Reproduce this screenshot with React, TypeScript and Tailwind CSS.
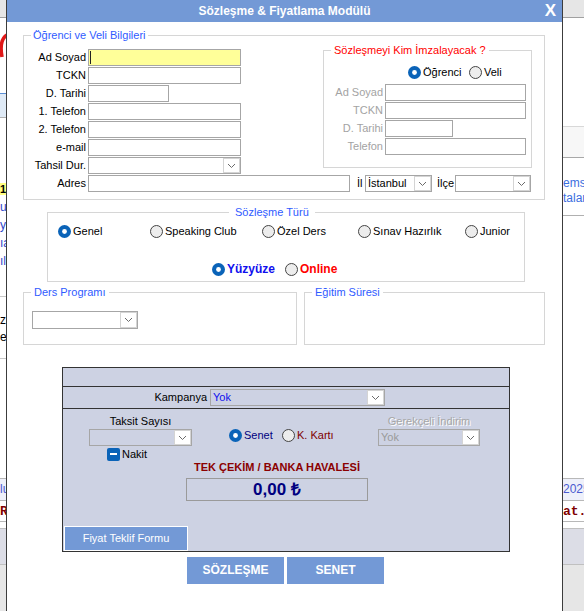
import React from "react";

function Chevron() {
  return (
    <svg width="9" height="6" viewBox="0 0 9 6">
      <path d="M1 1l3.5 3.5L8 1" fill="none" stroke="#6b6b6b" strokeWidth="1" />
    </svg>
  );
}

function Radio({ on = false }: { on?: boolean }) {
  return on ? (
    <svg width="13" height="13" viewBox="0 0 13 13" className="shrink-0">
      <circle cx="6.5" cy="6.5" r="6.5" fill="#0a63b8" />
      <circle cx="6.5" cy="6.5" r="2.4" fill="#fff" />
    </svg>
  ) : (
    <svg width="13" height="13" viewBox="0 0 13 13" className="shrink-0">
      <circle cx="6.5" cy="6.5" r="6" fill="#ededed" stroke="#444" strokeWidth="1" />
    </svg>
  );
}

function Input({ w, yellow = false }: { w: string; yellow?: boolean }) {
  return (
    <div className={`relative h-[17px] border border-[#a6a6a6] ${yellow ? "bg-[#ffff99]" : "bg-white"} ${w}`}>
      {yellow && <div className="ml-[1px] mt-[1px] h-[13px] w-[1px] bg-[#222]" />}
    </div>
  );
}

function Select({
  w,
  text = "",
  tone = "text-black",
  bg = "bg-white",
  h = "h-[17px]",
}: {
  w: string;
  text?: string;
  tone?: string;
  bg?: string;
  h?: string;
}) {
  return (
    <div className={`flex items-stretch border border-[#a6a6a6] ${h} ${bg} ${w}`}>
      <div className={`flex flex-1 items-center pl-[2px] ${tone}`}>{text}</div>
      <div className="flex w-[17px] items-center justify-center border border-[#d4d4d4] bg-white">
        <Chevron />
      </div>
    </div>
  );
}

function Row({ label, children, gray = false }: { label: string; children: React.ReactNode; gray?: boolean }) {
  return (
    <div className="flex h-[17px] items-center">
      <span className={`text-right ${gray ? "w-[59px] text-[#a3a3a3]" : "w-[62px]"}`}>{label}</span>
      <div className="ml-[2px]">{children}</div>
    </div>
  );
}

function Opt({ on = false, label, w = "" }: { on?: boolean; label: string; w?: string }) {
  return (
    <div className={`flex items-center gap-[2px] ${w}`}>
      <Radio on={on} />
      <span>{label}</span>
    </div>
  );
}

function Strip({ side }: { side: "left" | "right" }) {
  const left = side === "left";
  return (
    <div className={`flex flex-col overflow-hidden ${left ? "w-[6px]" : "w-[21px]"}`}>
      <div className="h-[18px] shrink-0 border-b border-[#a0a0a0] bg-[#e6e6e6]" />
      {left ? (
        <>
          <div className="h-[15px] shrink-0" />
          <svg width="6" height="26" viewBox="0 0 6 26" className="shrink-0">
            <path d="M7 2C2 5 0 13 2 24" fill="none" stroke="#e01818" strokeWidth="3.5" />
          </svg>
          <div className="h-[34px] shrink-0" />
          <div className="h-[25px] shrink-0 border-y border-t-[#5b8fd6] border-b-[#b0b0b0] bg-[#dfeaf6]" />
          <div className="h-[65px] shrink-0" />
          <div className="h-[12px] shrink-0 bg-[#ffff80] text-[11px] font-bold leading-[12px]">1.</div>
          <div className="h-[3px] shrink-0" />
          {["unvan", "yetki", "ıa", "ılgi"].map((t) => (
            <div key={t} className="flex h-[18px] shrink-0 items-center whitespace-nowrap text-[12px] text-[#3048c8]">
              {t}
            </div>
          ))}
          <div className="h-[27px] shrink-0 border-b border-[#c8c8c8]" />
          <div className="h-[15px] shrink-0" />
          <div className="flex h-[17px] shrink-0 items-center whitespace-nowrap text-[12px]">za</div>
          <div className="flex h-[17px] shrink-0 items-center whitespace-nowrap text-[12px]">et</div>
          <div className="h-[13px] shrink-0 border-b border-[#c8c8c8]" />
          <div className="h-[119px] shrink-0" />
        </>
      ) : (
        <>
          <div className="h-[108px] shrink-0" />
          <div className="h-[32px] shrink-0 border-y border-t-[#d8d8d8] border-b-[#a8a8a8] bg-[#f7f7f7]" />
          <div className="h-[18px] shrink-0" />
          <div className="flex h-[15px] shrink-0 items-center whitespace-nowrap text-[12px] text-[#3b6ee0]">emsil</div>
          <div className="flex h-[15px] shrink-0 items-center whitespace-nowrap text-[12px] text-[#3b6ee0]">talar</div>
          <div className="h-[10px] shrink-0 border-b border-[#b0b0b0]" />
          <div className="h-[262px] shrink-0" />
        </>
      )}
      <div className="flex h-[22px] shrink-0 items-center whitespace-nowrap border-t border-[#b8b8b8] bg-[#eef0fa] text-[12px] text-[#4a5ad0]">
        {left ? "lu" : "2025"}
      </div>
      <div className="flex h-[22px] shrink-0 items-center whitespace-nowrap border-y border-[#b8b8b8] font-['Liberation_Mono',monospace] text-[13px] font-bold text-[#800000]">
        {left ? "R" : "at."}
      </div>
      <div className="h-[6px] shrink-0" />
      <div className="h-[37px] shrink-0 border-y border-[#c0c0c0] bg-[#dcdde6]" />
      <div className="flex-1 bg-[#e6e6e6]" />
    </div>
  );
}

export default function App() {
  return (
    <div className="flex h-[611px] w-[584px] overflow-hidden bg-white font-['Liberation_Sans',Arial,sans-serif] text-[11px] leading-[13px] text-black">
      <Strip side="left" />

      <div className="flex w-[557px] shrink-0 flex-col border-x border-[#3c3c3c] bg-white">
        <div className="flex h-[22px] shrink-0 items-center bg-[#7399d6] text-white">
          <div className="w-[40px]" />
          <div className="flex-1 text-center text-[12px] font-bold">Sözleşme &amp; Fiyatlama Modülü</div>
          <div className="w-[40px] pr-[6px] text-right text-[17px] font-bold leading-[22px]">X</div>
        </div>

        <fieldset className="ml-[16px] mt-[7px] w-[522px] border border-[#d6d6d6] pb-[7px]">
          <legend className="ml-[7px] px-[2px] text-[#2f5bff]">Öğrenci ve Veli Bilgileri</legend>
          <div className="mt-[2px] flex items-start">
            <div className="flex flex-col gap-[1px] pt-[5px]">
              <Row label="Ad Soyad"><Input w="w-[153px]" yellow /></Row>
              <Row label="TCKN"><Input w="w-[153px]" /></Row>
              <Row label="D. Tarihi"><Input w="w-[81px]" /></Row>
              <Row label="1. Telefon"><Input w="w-[153px]" /></Row>
              <Row label="2. Telefon"><Input w="w-[153px]" /></Row>
              <Row label="e-mail"><Input w="w-[153px]" /></Row>
              <Row label="Tahsil Dur."><Select w="w-[153px]" /></Row>
            </div>
            <fieldset className="ml-[82px] w-[209px] border border-[#d6d6d6] pb-[12px]">
              <legend className="ml-[7px] px-[3px] text-[#ff0000]">Sözleşmeyi Kim İmzalayacak ?</legend>
              <div className="mt-[8px] flex h-[14px] items-center pl-[84px]">
                <Opt on label="Öğrenci" w="w-[61px]" />
                <Opt label="Veli" />
              </div>
              <div className="mt-[5px] flex flex-col gap-[1px]">
                <Row gray label="Ad Soyad"><Input w="w-[141px]" /></Row>
                <Row gray label="TCKN"><Input w="w-[141px]" /></Row>
                <Row gray label="D. Tarihi"><Input w="w-[68px]" /></Row>
                <Row gray label="Telefon"><Input w="w-[141px]" /></Row>
              </div>
            </fieldset>
          </div>
          <div className="mt-[1px] flex h-[17px] items-center">
            <span className="w-[62px] text-right">Adres</span>
            <div className="ml-[2px]"><Input w="w-[262px]" /></div>
            <span className="ml-[7px] w-[8px]">İl</span>
            <Select w="w-[67px]" text="İstanbul" />
            <span className="ml-[5px] w-[18px]">İlçe</span>
            <Select w="w-[76px]" />
          </div>
        </fieldset>

        <fieldset className="ml-[40px] mt-[6px] w-[478px] border border-[#d6d6d6] pb-[5px]">
          <legend className="ml-[181px] px-[6px] text-[#2f5bff]">Sözleşme Türü</legend>
          <div className="mt-[5px] flex h-[14px] items-center pl-[10px]">
            <Opt on label="Genel" w="w-[92px]" />
            <Opt label="Speaking Club" w="w-[112px]" />
            <Opt label="Özel Ders" w="w-[96px]" />
            <Opt label="Sınav Hazırlık" w="w-[107px]" />
            <Opt label="Junior" />
          </div>
          <div className="mt-[24px] flex h-[14px] items-center pl-[164px] text-[12px] font-bold">
            <div className="flex w-[73px] items-center gap-[2px] text-[#1010ee]">
              <Radio on />
              <span>Yüzyüze</span>
            </div>
            <div className="flex items-center gap-[2px] text-[#ff0000]">
              <Radio />
              <span>Online</span>
            </div>
          </div>
        </fieldset>

        <div className="ml-[16px] mt-[4px] flex gap-[7px]">
          <fieldset className="h-[59px] w-[274px] border border-[#d6d6d6]">
            <legend className="ml-[7px] px-[3px] text-[#2f5bff]">Ders Programı</legend>
            <div className="ml-[8px] mt-[12px]">
              <Select w="w-[106px]" h="h-[18px]" />
            </div>
          </fieldset>
          <fieldset className="h-[59px] w-[241px] border border-[#d6d6d6]">
            <legend className="ml-[7px] px-[3px] text-[#2f5bff]">Eğitim Süresi</legend>
          </fieldset>
        </div>

        <div className="ml-[55px] mt-[22px] flex h-[185px] w-[448px] flex-col border border-[#333] bg-[#cdd2e3]">
          <div className="h-[19px] shrink-0 border-b border-[#333]" />
          <div className="flex h-[22px] shrink-0 items-center border-b border-[#333]">
            <span className="w-[144px] text-right">Kampanya</span>
            <div className="ml-[3px]">
              <Select w="w-[175px]" text="Yok" tone="text-[#1010ee]" bg="bg-transparent" />
            </div>
          </div>
          <div className="flex">
            <div className="ml-[26px] flex w-[103px] flex-col">
              <div className="mt-[5px] h-[14px] text-center leading-[14px]">Taksit Sayısı</div>
              <div className="mt-[1px]">
                <Select w="w-[103px]" bg="bg-transparent" />
              </div>
              <div className="mt-[2px] flex h-[12px] items-center gap-[2px] pl-[18px]">
                <div className="flex h-[13px] w-[13px] items-center justify-center rounded-[2px] bg-[#0a63b8]">
                  <div className="h-[2px] w-[7px] bg-white" />
                </div>
                <span>Nakit</span>
              </div>
            </div>
            <div className="ml-[37px] mt-[19px] flex h-[14px] items-center">
              <div className="flex w-[53px] items-center gap-[2px] text-[#000080]">
                <Radio on />
                <span>Senet</span>
              </div>
              <div className="flex items-center gap-[2px] text-[#800000]">
                <Radio />
                <span>K. Kartı</span>
              </div>
            </div>
            <div className="ml-auto mr-[29px] flex w-[102px] flex-col">
              <div className="mt-[5px] h-[14px] text-center leading-[14px] text-[#a6a6a6] [text-shadow:1px_1px_0_#ffffff]">
                Gerekçeli İndirim
              </div>
              <div className="mt-[1px]">
                <Select w="w-[102px]" text="Yok" tone="text-[#9a9a9a]" bg="bg-transparent" />
              </div>
            </div>
          </div>
          <div className="ml-[123px] h-[14px] w-[182px] text-center font-bold leading-[14px] text-[#8b0000]">
            TEK ÇEKİM / BANKA HAVALESİ
          </div>
          <div className="ml-[123px] mt-[4px] flex h-[23px] w-[182px] items-center justify-center border border-[#9a9a9a] text-[17px] font-bold text-[#000080]">
            0,00 ₺
          </div>
          <div className="ml-[1px] mt-auto flex h-[25px] w-[124px] items-center justify-center border border-white bg-[#7399d6] text-white">
            Fiyat Teklif Formu
          </div>
        </div>

        <div className="ml-[180px] mt-[5px] flex gap-[3px] text-[12px] font-bold text-white">
          <div className="flex h-[27px] w-[97px] items-center justify-center bg-[#7399d6]">SÖZLEŞME</div>
          <div className="flex h-[27px] w-[97px] items-center justify-center bg-[#7399d6]">SENET</div>
        </div>
      </div>

      <Strip side="right" />
    </div>
  );
}
